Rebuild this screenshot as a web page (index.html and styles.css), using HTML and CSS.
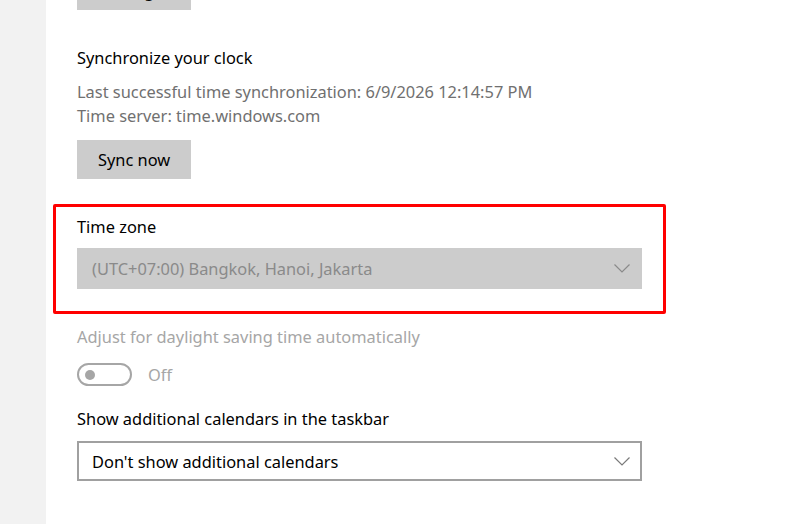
FILE: index.html
```html
<!DOCTYPE html>
<html>
<head>
<meta charset="utf-8">
<link rel="stylesheet" href="styles.css">
</head>
<body>
<div class="page">
  <nav class="sidebar"></nav>
  <main class="content">
    <button class="btn btn-top">Change</button>
    <h2 class="title sync-title">Synchronize your clock</h2>
    <p class="info">Last successful time synchronization: 6/9/2026 12:14:57 PM<br>Time server: time.windows.com</p>
    <button class="btn btn-sync">Sync now</button>
    <section class="highlight">
      <div class="title">Time zone</div>
      <div class="select select-disabled">
        <span>(UTC+07:00) Bangkok, Hanoi, Jakarta</span>
        <svg class="chev" width="16" height="9" viewBox="0 0 16 9"><path d="M0.5 0.5 L8 8 L15.5 0.5" fill="none" stroke="currentColor" stroke-width="1.2"/></svg>
      </div>
    </section>
    <div class="title disabled dst">Adjust for daylight saving time automatically</div>
    <div class="toggle-row">
      <span class="toggle"><span class="knob"></span></span>
      <span class="toggle-label">Off</span>
    </div>
    <div class="title cal-title">Show additional calendars in the taskbar</div>
    <div class="select select-normal">
      <span>Don't show additional calendars</span>
      <svg class="chev" width="16" height="9" viewBox="0 0 16 9"><path d="M0.5 0.5 L8 8 L15.5 0.5" fill="none" stroke="currentColor" stroke-width="1.2"/></svg>
    </div>
  </main>
</div>
</body>
</html>
```
FILE: styles.css
```css
html, body {
  margin: 0;
  padding: 0;
  background: #ffffff;
  overflow: hidden;
}
body {
  font-family: "Noto Sans", "Open Sans", sans-serif;
  font-size: 16.4px;
  color: #000;
}
.page {
  display: flex;
  height: 524px;
}
.sidebar {
  width: 46px;
  flex: none;
  background: #f2f2f2;
}
.content {
  flex: 1;
  padding-left: 31px;
  display: flex;
  flex-direction: column;
  align-items: flex-start;
}
.btn {
  font-family: inherit;
  font-size: 16.4px;
  color: #000;
  background: #cccccc;
  border: none;
  width: 114px;
  height: 39px;
  padding: 0;
  margin: 0;
}
.btn-top {
  margin-top: -29px;
}
.title {
  font-size: 16.4px;
  line-height: 20px;
  margin: 0;
  font-weight: normal;
}
.sync-title {
  margin-top: 38px;
}
.info {
  margin: 12px 0 0 0;
  line-height: 24px;
  color: #707070;
}
.btn-sync {
  margin-top: 12px;
}
.highlight {
  margin: 25px 0 0 -24px;
  width: 565px;
  padding: 10px 21px 22px 21px;
  border: 3px solid #ff0000;
  border-radius: 2px;
}
.select {
  box-sizing: border-box;
  width: 565px;
  height: 41px;
  display: flex;
  align-items: center;
  justify-content: space-between;
  padding: 0 12px 0 15px;
}
.select-disabled {
  margin-top: 11px;
  background: #cccccc;
  color: #8a8a8a;
}
.select-normal {
  margin-top: 12px;
  border: 2px solid #a0a0a0;
  padding-left: 13px;
  padding-right: 10px;
  height: 40px;
}
.chev {
  color: #8a8a8a;
  display: block;
}
.select-normal .chev {
  color: #7a7a7a;
}
.disabled {
  color: #a6a6a6;
}
.dst {
  margin-top: 13px;
}
.toggle-row {
  margin-top: 16px;
  display: flex;
  align-items: center;
}
.toggle {
  box-sizing: border-box;
  width: 55px;
  height: 23px;
  border: 2px solid #a6a6a6;
  border-radius: 12px;
  display: flex;
  align-items: center;
  padding-left: 6px;
}
.knob {
  width: 10px;
  height: 10px;
  border-radius: 50%;
  background: #a6a6a6;
}
.toggle-label {
  margin-left: 16px;
  color: #a6a6a6;
  line-height: 20px;
}
.cal-title {
  margin-top: 23px;
}
```
